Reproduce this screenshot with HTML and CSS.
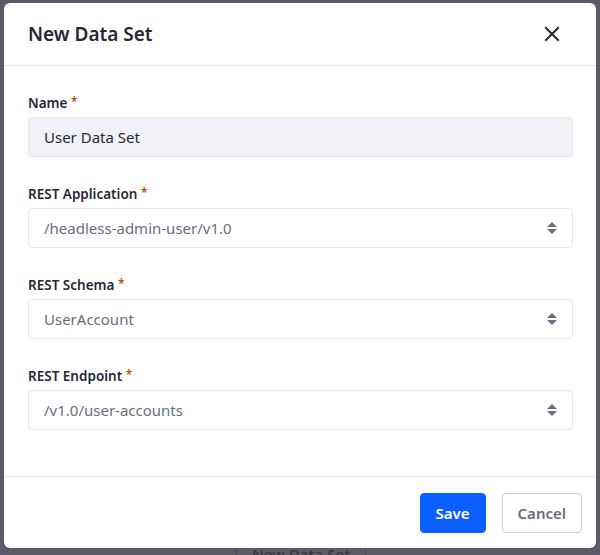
FILE: index.html
```html
<!DOCTYPE html>
<html>
<head>
<meta charset="utf-8">
<link rel="stylesheet" href="styles.css">
</head>
<body>
<div class="behind">
  <span class="behind-sep"></span>
  <span class="behind-text">New Data Set</span>
  <span class="behind-sep"></span>
</div>
<div class="modal">
  <div class="modal-header">
    <h1 class="modal-title">New Data Set</h1>
    <button class="close" aria-label="Close">
      <svg width="16" height="16" viewBox="0 0 16 16"><path d="M2 2 L14 14 M14 2 L2 14" stroke="#272833" stroke-width="2" stroke-linecap="square" fill="none"/></svg>
    </button>
  </div>
  <div class="modal-body">
    <div class="group">
      <label class="label">Name <span class="req">*</span></label>
      <div class="input readonly">User Data Set</div>
    </div>
    <div class="group">
      <label class="label">REST Application <span class="req">*</span></label>
      <div class="input select"><span>/headless-admin-user/v1.0</span><svg class="caret" width="12" height="16" viewBox="0 0 12 16"><path d="M6 2 L11 7 L1 7 Z M6 14 L11 9 L1 9 Z" fill="#6b6c7e"/></svg></div>
    </div>
    <div class="group">
      <label class="label">REST Schema <span class="req">*</span></label>
      <div class="input select"><span>UserAccount</span><svg class="caret" width="12" height="16" viewBox="0 0 12 16"><path d="M6 2 L11 7 L1 7 Z M6 14 L11 9 L1 9 Z" fill="#6b6c7e"/></svg></div>
    </div>
    <div class="group">
      <label class="label">REST Endpoint <span class="req">*</span></label>
      <div class="input select"><span>/v1.0/user-accounts</span><svg class="caret" width="12" height="16" viewBox="0 0 12 16"><path d="M6 2 L11 7 L1 7 Z M6 14 L11 9 L1 9 Z" fill="#6b6c7e"/></svg></div>
    </div>
  </div>
  <div class="modal-footer">
    <button class="btn btn-primary">Save</button>
    <button class="btn btn-secondary">Cancel</button>
  </div>
</div>
</body>
</html>
```
FILE: styles.css
```css
* { box-sizing: border-box; }
html, body { margin: 0; padding: 0; }
body {
  width: 600px;
  height: 555px;
  background: #5b5a68;
  font-family: "Noto Sans", "Liberation Sans", sans-serif;
  color: #272833;
  position: relative;
  overflow: hidden;
  padding: 3px 4px 0 4px;
}
.behind {
  position: absolute;
  left: 236px;
  top: 543px;
  display: flex;
  align-items: flex-start;
  gap: 15px;
}
.behind-text {
  font-size: 15px;
  font-weight: 600;
  color: #3a3947;
  line-height: 22px;
}
.behind-sep {
  width: 1px;
  height: 20px;
  background: #4a4957;
  margin-top: 4px;
}
.modal {
  position: relative;
  width: 592px;
  height: 545px;
  background: #fff;
  border-radius: 6px;
  display: flex;
  flex-direction: column;
}
.modal-header {
  height: 63px;
  border-bottom: 1px solid #e7e7ed;
  display: flex;
  align-items: center;
  justify-content: space-between;
  padding: 0 36px 0 24px;
}
.modal-title {
  margin: 0;
  font-size: 19px;
  font-weight: 600;
  line-height: 28px;
  color: #272833;
}
.close {
  border: 0;
  background: none;
  padding: 0;
  width: 16px;
  height: 16px;
  display: flex;
  cursor: pointer;
}
.modal-body {
  flex: 1;
  padding: 27px 23px 0 24px;
}
.group {
  margin-bottom: 27px;
}
.label {
  display: block;
  font-size: 13.5px;
  font-weight: 600;
  line-height: 20px;
  height: 20px;
  margin-bottom: 4px;
  color: #272833;
}
.req {
  color: #b95000;
  font-size: 12px;
  position: relative;
  top: -2px;
}
.input {
  height: 40px;
  border: 1px solid #e7e7ed;
  border-radius: 4px;
  padding: 0 15px;
  display: flex;
  align-items: center;
  font-size: 15px;
  color: #6b6c7e;
  background: #fff;
}
.input.readonly {
  background: #f1f2f5;
  color: #272833;
}
.select {
  justify-content: space-between;
  padding-right: 14px;
}
.caret { display: block; }
.modal-footer {
  height: 72px;
  border-top: 1px solid #e7e7ed;
  display: flex;
  align-items: center;
  justify-content: flex-end;
  gap: 16px;
  padding: 0 14px 0 24px;
}
.btn {
  height: 40px;
  border-radius: 4px;
  font-family: inherit;
  font-size: 15px;
  font-weight: 600;
  padding: 0 15px;
  cursor: pointer;
}
.btn-primary {
  background: #0b5fff;
  border: 1px solid #0b5fff;
  color: #fff;
}
.btn-secondary {
  background: #fff;
  border: 1px solid #cdced9;
  color: #6b6c7e;
}
```
